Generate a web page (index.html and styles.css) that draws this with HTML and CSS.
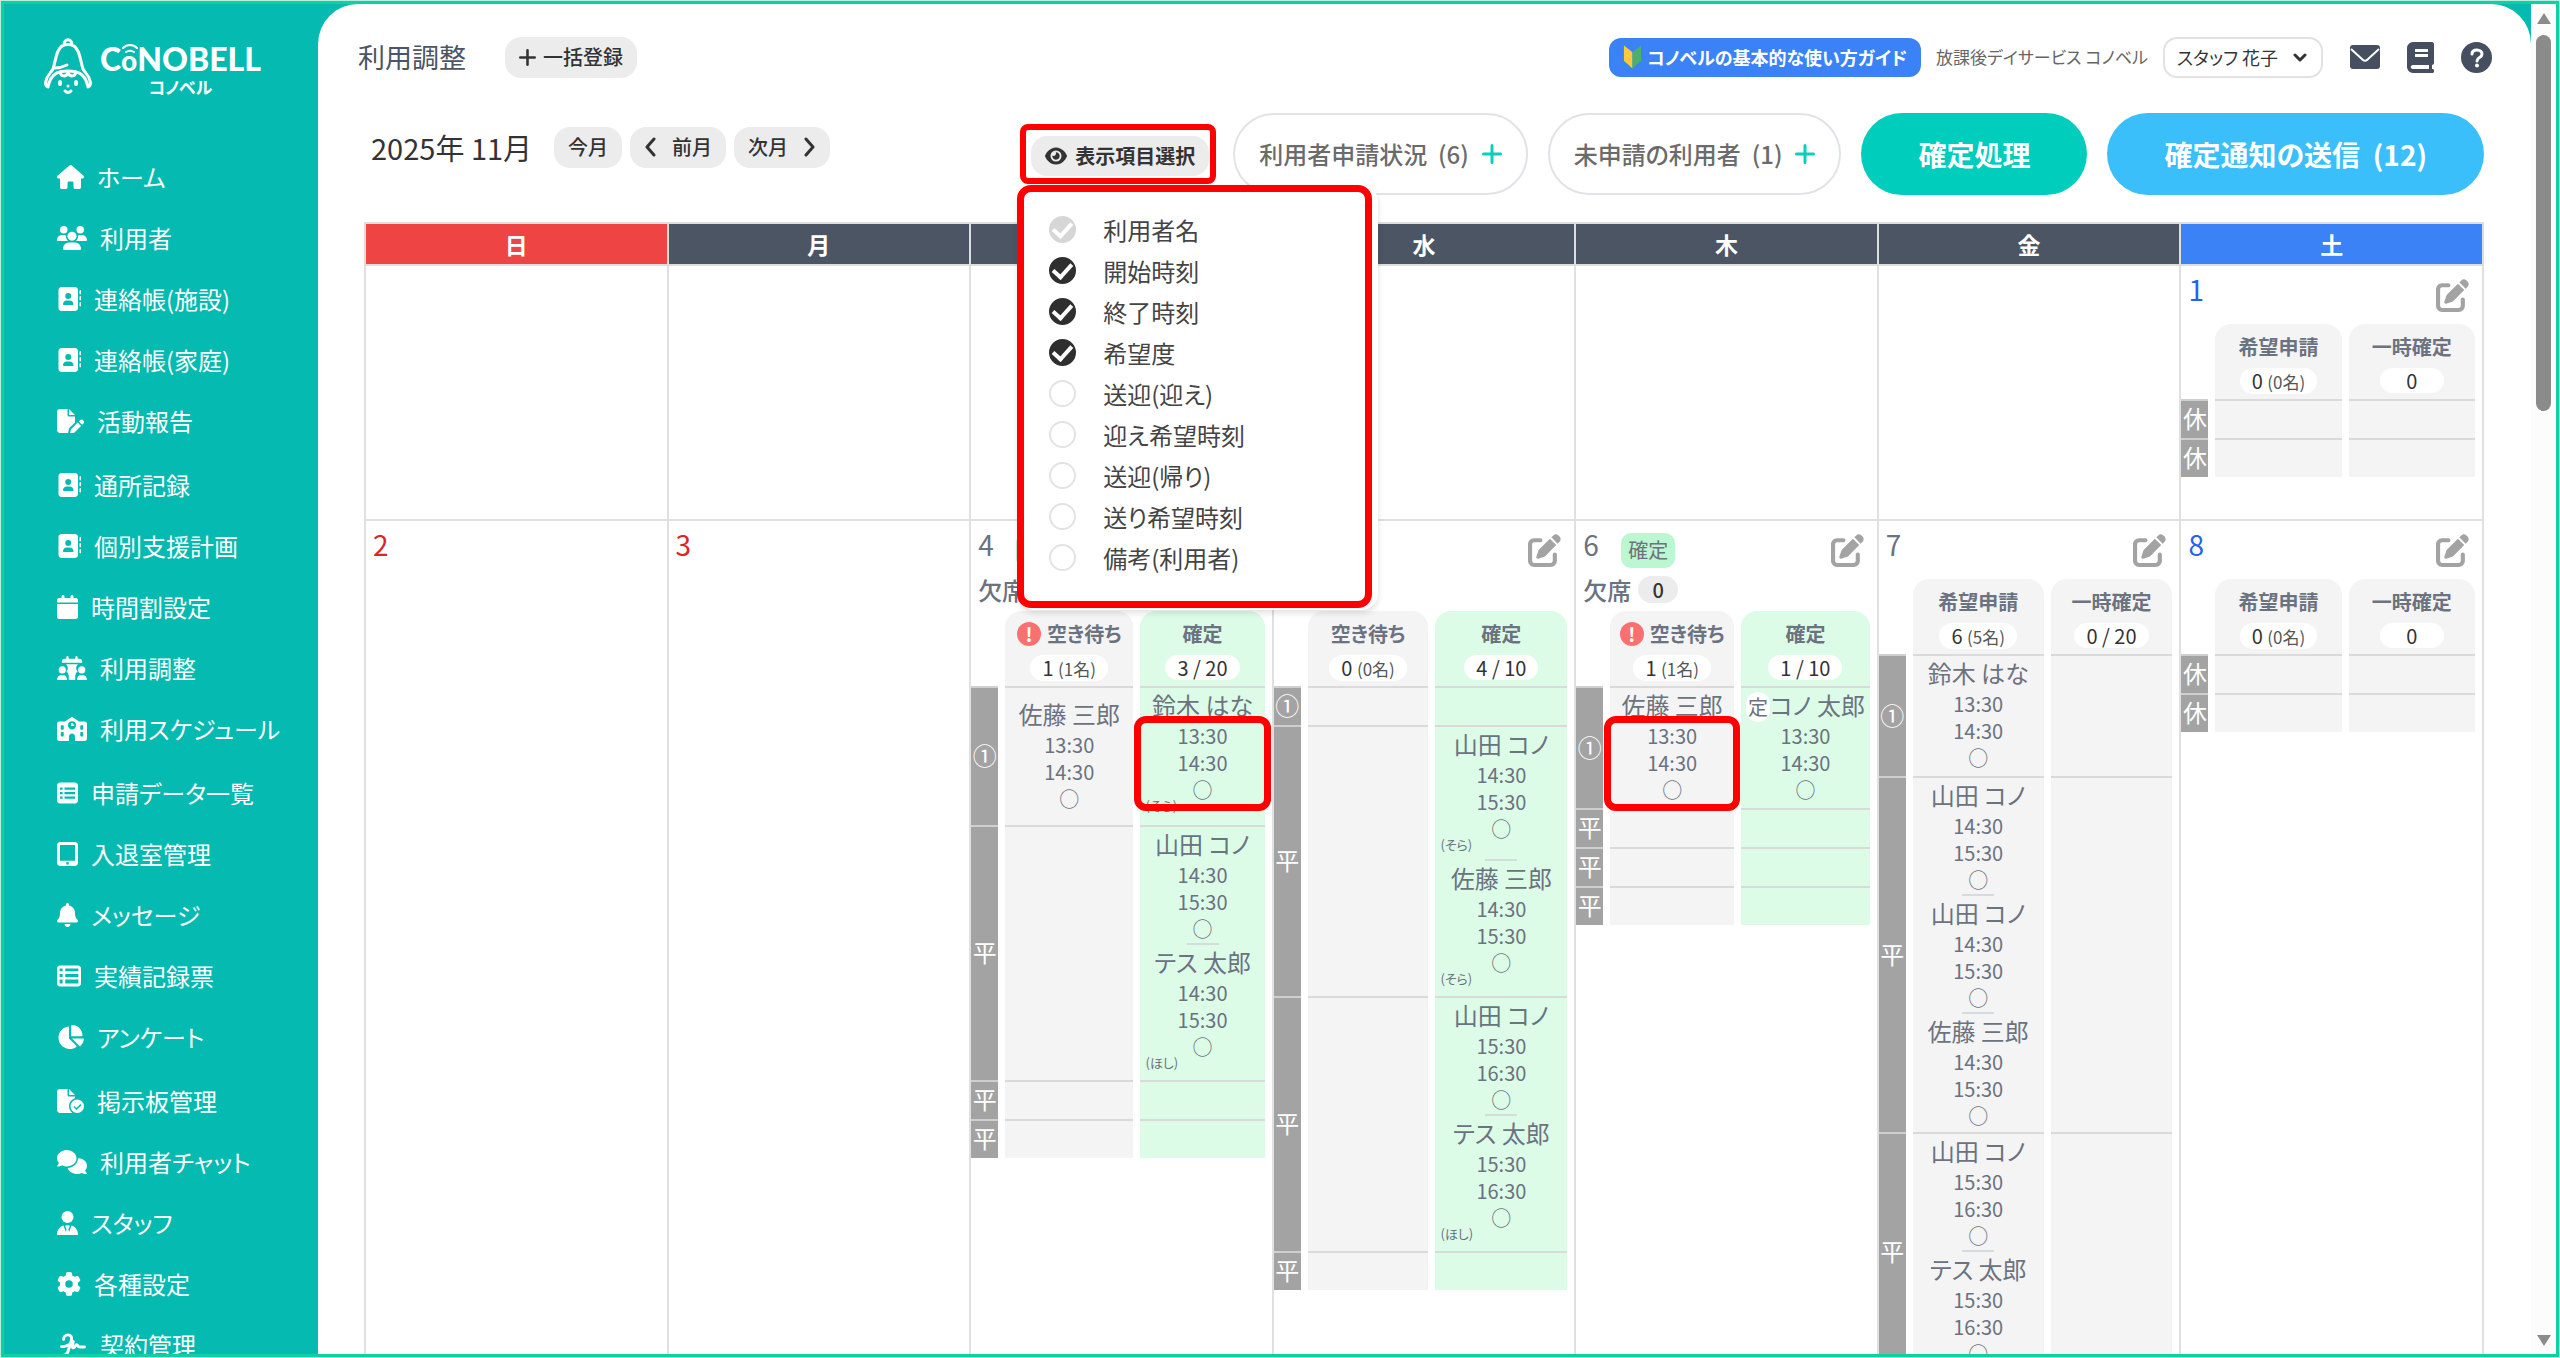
FILE: index.html
```html
<!DOCTYPE html>
<html lang="ja">
<head>
<meta charset="utf-8">
<meta name="viewport" content="width=device-width, initial-scale=1">
<title>利用調整 | コノベル</title>
<link rel="stylesheet" href="styles.css">
</head>
<body>
<svg class="sprite" aria-hidden="true">
  <symbol id="i-home" viewBox="0 0 576 512"><path d="M575.8 255.5c0 18-15 32.1-32 32.1h-32l.7 160.2c0 2.7-.2 5.4-.5 8.1V472c0 22.1-17.9 40-40 40H392c-22.1 0-40-17.9-40-40V384c0-17.7-14.3-32-32-32H256c-17.7 0-32 14.3-32 32v88c0 22.1-17.9 40-40 40H104c-22.1 0-40-17.9-40-40V287.600H32c-18 0-32-14-32-32.100c0-9 3-17 10-24L266.400 8c7-7 15-8 22-8s15 2 21 7L564.800 231.500c8 7 12 15 11 24z"/></symbol>
  <symbol id="i-users" viewBox="0 0 640 512"><circle cx="144" cy="80" r="80"/><circle cx="496" cy="80" r="80"/><circle cx="320" cy="216" r="96"/><path d="M0 299c0-59 48-107 107-107h42c16 0 31 4 45 10-1 7-2 15-2 22 0 38 17 72 43 96H21c-11 0-21-10-21-21zM405 320c27-24 43-58 43-96 0-8-1-15-2-22 14-6 29-10 45-10h42c59 0 107 48 107 107 0 11-10 21-21 21zM128 485c0-73 60-133 133-133h118c73 0 133 60 133 133 0 15-12 27-27 27H155c-15 0-27-12-27-27z"/></symbol>
  <symbol id="i-book-user" viewBox="0 0 512 512"><path d="M96 0C60.700 0 32 28.700 32 64V448c0 35.300 28.700 64 64 64H384c35.300 0 64-28.700 64-64V64c0-35.300-28.700-64-64-64H96zM208 288h64c44.200 0 80 35.800 80 80c0 8.800-7.200 16-16 16H144c-8.800 0-16-7.200-16-16c0-44.200 35.800-80 80-80zm-32-96a64 64 0 1 1 128 0 64 64 0 1 1 -128 0zM512 80c0-8.800-7.200-16-16-16s-16 7.200-16 16v64c0 8.800 7.200 16 16 16s16-7.200 16-16V80zM496 192c-8.800 0-16 7.200-16 16v64c0 8.800 7.200 16 16 16s16-7.200 16-16V208c0-8.800-7.200-16-16-16zm16 144c0-8.800-7.200-16-16-16s-16 7.200-16 16v64c0 8.800 7.200 16 16 16s16-7.200 16-16V336z"/></symbol>
  <symbol id="i-file-pen" viewBox="0 0 576 512"><path d="M0 64C0 29 29 0 64 0h160v128c0 18 14 32 32 32h128v126L273 397c-9 9-15 19-18 31l-21 84H64c-35 0-64-29-64-64zM384 128H256V0zM550 235l16 16c16 16 16 41 0 57l-30 30-71-71 30-30c15-16 40-16 55-2zM303 429l139-139 71 71-139 139c-4 4-9 7-15 8l-60 15c-5 1-11 0-15-4s-5-10-4-15l15-60c1-6 4-11 8-15z"/></symbol>
  <symbol id="i-calendar" viewBox="0 0 448 512"><path d="M96 32V64H48C21.500 64 0 85.500 0 112v48H448V112c0-26.500-21.500-48-48-48H352V32c0-17.700-14.300-32-32-32s-32 14.300-32 32V64H160V32c0-17.700-14.300-32-32-32S96 14.300 96 32zM448 192H0V464c0 26.500 21.500 48 48 48H400c26.500 0 48-21.500 48-48V192z"/></symbol>
  <symbol id="i-calendar-users" viewBox="0 0 640 512"><path d="M200 30c0-38 48-38 48 0v26h144V30c0-38 48-38 48 0v26h40c32 0 56 24 56 52v36H104v-36c0-28 24-52 56-52h40zM190 176h260c-48 34-58 110-10 154-38 26-52 60-52 120v62H252v-62c0-60-14-94-52-120 48-44 38-120-10-154z"/><circle cx="112" cy="296" r="76"/><circle cx="528" cy="296" r="76"/><path d="M0 512c0-62 36-104 84-104h56c42 0 76 42 76 104zM424 512c0-62 34-104 76-104h56c48 0 84 42 84 104z"/></symbol>
  <symbol id="i-school" viewBox="0 0 640 512"><path fill-rule="evenodd" d="M337 5l134 91h121c26 0 48 22 48 48v320c0 26-22 48-48 48H384v-96c0-35-29-64-64-64s-64 29-64 64v96H48c-26 0-48-22-48-48V144c0-26 22-48 48-48h121L303 5c10-7 24-7 34 0zM80 192v64c0 9 7 16 16 16h32c9 0 16-7 16-16v-64c0-9-7-16-16-16H96c-9 0-16 7-16 16zm416 0v64c0 9 7 16 16 16h32c9 0 16-7 16-16v-64c0-9-7-16-16-16h-32c-9 0-16 7-16 16zM80 336v64c0 9 7 16 16 16h32c9 0 16-7 16-16v-64c0-9-7-16-16-16H96c-9 0-16 7-16 16zm416 0v64c0 9 7 16 16 16h32c9 0 16-7 16-16v-64c0-9-7-16-16-16h-32c-9 0-16 7-16 16zM320 88a88 88 0 1 0 0 176 88 88 0 1 0 0-176zm-16 40h32v32h32v32h-64z"/></symbol>
  <symbol id="i-list" viewBox="0 0 448 512"><path fill-rule="evenodd" d="M64 32h320c35 0 64 29 64 64v320c0 35-29 64-64 64H64c-35 0-64-29-64-64V96c0-35 29-64 64-64zM64 136v48h56v-48zm96 0v48h224v-48zM64 232v48h56v-48zm96 0v48h224v-48zM64 328v48h56v-48zm96 0v48h224v-48z"/></symbol>
  <symbol id="i-tablet" viewBox="0 0 448 512"><path fill-rule="evenodd" d="M64 0h320c35 0 64 29 64 64v384c0 35-29 64-64 64H64c-35 0-64-29-64-64V64C0 29 29 0 64 0zm0 64v336h320V64zm160 360a30 30 0 1 0 0 60 30 30 0 1 0 0-60z"/></symbol>
  <symbol id="i-bell" viewBox="0 0 448 512"><path d="M224 0c-17.700 0-32 14.300-32 32V51.200C119 66 64 130.600 64 208v18.800c0 47-17.300 92.400-48.500 127.600l-7.400 8.300c-8.400 9.400-10.400 22.900-5.300 34.400S19.400 416 32 416H416c12.600 0 24-7.400 29.200-18.900s3.100-25-5.300-34.400l-7.400-8.300C401.300 319.200 384 273.900 384 226.800V208c0-77.400-55-142-128-156.800V32c0-17.700-14.300-32-32-32zm45.300 493.300c12-12 18.700-28.300 18.700-45.300H160c0 17 6.700 33.300 18.700 45.300s28.300 18.700 45.300 18.700s33.300-6.700 45.300-18.700z"/></symbol>
  <symbol id="i-table" viewBox="0 0 512 512"><path fill-rule="evenodd" d="M64 32h384c35 0 64 29 64 64v320c0 35-29 64-64 64H64c-35 0-64-29-64-64V96c0-35 29-64 64-64zm-8 64v60h64V96zm120 0v60h280V96zM56 212v64h64v-64zm120 0v64h280v-64zM56 332v84h64v-84zm120 0v84h280v-84z"/></symbol>
  <symbol id="i-pie" viewBox="0 0 576 512"><path d="M304 240V16.600c0-9 7-16.600 16-16.600C443.700 0 544 100.300 544 224c0 9-7.600 16-16.600 16H304zM32 272C32 150.700 122.100 50.300 239 34.300c9.200-1.300 17 6.100 17 15.400V288L412.500 444.500c6.700 6.700 6.200 17.700-1.500 23.100C371.800 495.600 323.800 512 272 512C139.500 512 32 404.600 32 272zm526.400 16c9.300 0 16.600 7.800 15.400 17c-7.700 55.900-34.600 105.600-73.900 142.300c-6 5.600-15.400 5.200-21.200-.7L320 288H558.400z"/></symbol>
  <symbol id="i-file-check" viewBox="0 0 576 512"><path fill-rule="evenodd" d="M0 64C0 29 29 0 64 0h160v128c0 18 14 32 32 32h128v38c-74 21-128 89-128 170 0 60 29 112 74 144H64c-35 0-64-29-64-64zM384 128H256V0zM432 224a144 144 0 1 1 0 288 144 144 0 1 1 0-288zm67 98l-83 83-42-42-22 22 64 65 106-106z"/></symbol>
  <symbol id="i-comments" viewBox="0 0 640 512"><path d="M208 352c115 0 208-79 208-176S323 0 208 0 0 79 0 176c0 39 15 74 40 103-4 24-17 43-36 57-6 5 0 16 8 16 40 0 76-11 100-26 29 16 62 26 96 26zM448 176c0 112-98 201-221 208 26 74 107 128 205 128 34 0 67-7 95-19 26 13 60 19 101 19 9 0 15-9 8-16-17-15-30-34-36-58 25-29 40-65 40-102 0-88-85-160-192-160z"/></symbol>
  <symbol id="i-staff" viewBox="0 0 448 512"><circle cx="224" cy="128" r="128"/><path d="M0 500c0-90 58-170 138-190l52 138 14-60-24-52c-6-14 2-32 18-32h52c16 0 24 18 18 32l-24 52 14 60 52-138c80 20 138 100 138 190 0 8-6 12-12 12H12c-6 0-12-4-12-12z"/></symbol>
  <symbol id="i-gear" viewBox="0 0 512 512"><path d="M495.900 166.600c3.200 8.700 .5 18.400-6.400 24.600l-43.300 39.400c1.100 8.300 1.700 16.800 1.700 25.400s-.6 17.100-1.700 25.400l43.300 39.400c6.900 6.200 9.600 15.900 6.400 24.600c-4.400 11.900-9.700 23.300-15.800 34.300l-4.700 8.100c-6.600 11-14 21.400-22.100 31.200c-5.900 7.200-15.700 9.600-24.500 6.800l-55.700-17.700c-13.400 10.300-28.200 18.900-44 25.400l-12.500 57.100c-2 9.100-9 16.300-18.200 17.800c-13.800 2.300-28 3.500-42.500 3.500s-28.700-1.200-42.500-3.500c-9.200-1.500-16.200-8.700-18.200-17.800l-12.500-57.100c-15.800-6.500-30.600-15.100-44-25.400L83.100 425.900c-8.800 2.800-18.600 .3-24.500-6.800c-8.100-9.800-15.500-20.200-22.100-31.200l-4.700-8.100c-6.100-11-11.400-22.400-15.800-34.300c-3.200-8.700-.5-18.400 6.400-24.600l43.300-39.400C64.600 273.100 64 264.600 64 256s.6-17.100 1.700-25.400L22.400 191.200c-6.900-6.200-9.600-15.900-6.400-24.600c4.400-11.900 9.700-23.300 15.800-34.300l4.700-8.100c6.600-11 14-21.400 22.100-31.200c5.900-7.200 15.700-9.600 24.500-6.800l55.700 17.700c13.400-10.300 28.200-18.900 44-25.400l12.500-57.100c2-9.100 9-16.300 18.200-17.800C227.300 1.200 241.500 0 256 0s28.700 1.200 42.500 3.500c9.200 1.500 16.200 8.700 18.200 17.800l12.500 57.100c15.800 6.500 30.600 15.100 44 25.400l55.700-17.700c8.800-2.800 18.600-.3 24.500 6.800c8.100 9.800 15.500 20.200 22.100 31.200l4.700 8.100c6.100 11 11.400 22.400 15.800 34.300zM256 336a80 80 0 1 0 0-160 80 80 0 1 0 0 160z"/></symbol>
  <symbol id="i-sign" viewBox="0 0 640 512"><path fill="none" stroke="currentColor" stroke-width="62" stroke-linecap="round" stroke-linejoin="round" d="M140 140c0-60 40-100 92-100 66 0 92 54 72 122L232 400c-20 60-70 80-120 80M96 290c120 0 200-60 250-110l-20 100c-8 40 30 50 50 20l20-30c20-28 46-20 50 4 4 26 24 26 50 26h90"/></symbol>
  <symbol id="i-edit" viewBox="0 0 512 512"><path d="M471.600 21.700c-21.900-21.900-57.300-21.900-79.200 0L362.300 51.700l97.900 97.900 30.100-30.100c21.900-21.900 21.900-57.300 0-79.200L471.600 21.700zm-299.200 220c-6.100 6.100-10.800 13.600-13.500 21.900l-29.600 88.800c-2.900 8.600-.6 18.100 5.800 24.600s15.900 8.700 24.600 5.800l88.800-29.600c8.200-2.700 15.700-7.400 21.900-13.500L437.700 172.300 339.700 74.300 172.400 241.700zM96 64C43 64 0 107 0 160V416c0 53 43 96 96 96H352c53 0 96-43 96-96V320c0-17.700-14.300-32-32-32s-32 14.300-32 32v96c0 17.700-14.300 32-32 32H96c-17.700 0-32-14.300-32-32V160c0-17.700 14.300-32 32-32h96c17.700 0 32-14.300 32-32s-14.300-32-32-32H96z"/></symbol>
  <symbol id="i-eye" viewBox="0 0 576 512"><path d="M288 32c-80.800 0-145.500 36.800-192.600 80.600C48.600 156 17.300 208 2.500 243.700c-3.300 7.900-3.300 16.700 0 24.600C17.300 304 48.600 356 95.400 399.400C142.500 443.200 207.200 480 288 480s145.500-36.800 192.600-80.600c46.800-43.500 78.100-95.400 93-131.100c3.300-7.900 3.300-16.700 0-24.600c-14.900-35.700-46.200-87.700-93-131.100C433.500 68.800 368.800 32 288 32zM144 256a144 144 0 1 1 288 0 144 144 0 1 1 -288 0zm144-64c0 35.300-28.700 64-64 64c-7.100 0-13.900-1.200-20.300-3.300c-5.500-1.800-11.900 1.600-11.700 7.400c.3 6.900 1.300 13.800 3.200 20.700c13.700 51.200 66.400 81.600 117.600 67.900s81.600-66.400 67.900-117.600c-11.100-41.500-47.800-69.400-88.600-71.100c-5.800-.2-9.200 6.100-7.400 11.700c2.100 6.400 3.300 13.200 3.300 20.300z"/></symbol>
  <symbol id="i-plus" viewBox="0 0 20 20"><path fill="none" stroke="currentColor" stroke-width="3" stroke-linecap="round" d="M10 1.500v17M1.500 10h17"/></symbol>
  <symbol id="i-left" viewBox="0 0 12 20"><path fill="none" stroke="currentColor" stroke-width="3" stroke-linecap="round" stroke-linejoin="round" d="M10 2L3 10l7 8"/></symbol>
  <symbol id="i-right" viewBox="0 0 12 20"><path fill="none" stroke="currentColor" stroke-width="3" stroke-linecap="round" stroke-linejoin="round" d="M2 2l7 8-7 8"/></symbol>
</svg>

<div class="app">
  <aside class="sidebar">
    <a class="logo" href="#">
      <svg class="logo-mark" viewBox="0 0 50 58" aria-hidden="true">
        <g fill="none" stroke="#fff" stroke-width="3" stroke-linecap="round" stroke-linejoin="round">
          <path d="M21 8c0-7 8-7 8 0M19 9c4-2 8-2 12 0"/>
          <path d="M19 9c-6 4-6 14-9 23-2 4-6 6-7 12-1 3 0 5 2 6 3-15 12-16 20-16s17 1 20 16c2-1 3-3 2-6-1-6-5-8-7-12-3-9-3-19-9-23"/>
          <path d="M12 31c5 0 8-1 12-3M17 35c1 5 6 5 8 1 2 4 7 4 8-1M22 54c2 2 4 2 6 0"/>
        </g>
        <g fill="#fff"><ellipse cx="17" cy="46" rx="2" ry="3"/><ellipse cx="33" cy="46" rx="2" ry="3"/><circle cx="25" cy="49" r="1.500"/></g>
      </svg>
      <span class="logo-text">
        <span class="logo-name">C<span class="logo-o">o<svg class="logo-wave" viewBox="0 0 18 9" aria-hidden="true"><path d="M2 4c4-4 10-4 14 0M5 8c3-2 5-2 8 0" fill="none" stroke="#fff" stroke-width="2" stroke-linecap="round"/></svg></span>NOBELL</span>
        <span class="logo-kana">コノベル</span>
      </span>
    </a>
    <nav class="nav">
      <ul>
        <li><a href="#"><svg class="w27"><use href="#i-home"/></svg>ホーム</a></li>
        <li><a href="#"><svg class="w30"><use href="#i-users"/></svg>利用者</a></li>
        <li><a href="#"><svg class="w24"><use href="#i-book-user"/></svg>連絡帳(施設)</a></li>
        <li><a href="#"><svg class="w24"><use href="#i-book-user"/></svg>連絡帳(家庭)</a></li>
        <li><a href="#"><svg class="w27"><use href="#i-file-pen"/></svg>活動報告</a></li>
      </ul>
      <ul>
        <li><a href="#"><svg class="w24"><use href="#i-book-user"/></svg>通所記録</a></li>
        <li><a href="#"><svg class="w24"><use href="#i-book-user"/></svg>個別支援計画</a></li>
        <li><a href="#"><svg class="w21"><use href="#i-calendar"/></svg>時間割設定</a></li>
        <li><a href="#"><svg class="w30"><use href="#i-calendar-users"/></svg>利用調整</a></li>
        <li><a href="#"><svg class="w30"><use href="#i-school"/></svg>利用スケジュール</a></li>
      </ul>
      <ul>
        <li><a href="#"><svg class="w21"><use href="#i-list"/></svg>申請データ一覧</a></li>
        <li><a href="#"><svg class="w21"><use href="#i-tablet"/></svg>入退室管理</a></li>
        <li><a href="#"><svg class="w21"><use href="#i-bell"/></svg>メッセージ</a></li>
        <li><a href="#"><svg class="w24"><use href="#i-table"/></svg>実績記録票</a></li>
        <li><a href="#"><svg class="w27"><use href="#i-pie"/></svg>アンケート</a></li>
      </ul>
      <ul>
        <li><a href="#"><svg class="w27"><use href="#i-file-check"/></svg>掲示板管理</a></li>
        <li><a href="#"><svg class="w30"><use href="#i-comments"/></svg>利用者チャット</a></li>
        <li><a href="#"><svg class="w21"><use href="#i-staff"/></svg>スタッフ</a></li>
        <li><a href="#"><svg class="w24"><use href="#i-gear"/></svg>各種設定</a></li>
        <li><a href="#"><svg class="w30"><use href="#i-sign"/></svg>契約管理</a></li>
      </ul>
    </nav>
  </aside>

  <main class="main">
    <header class="topbar">
      <h1>利用調整</h1>
      <button class="chip" type="button"><svg class="plus"><use href="#i-plus"/></svg>一括登録</button>
      <div class="topbar-right">
        <a class="guide" href="#"><svg viewBox="0 0 20 26" aria-hidden="true"><path d="M1 1l9 7v17l-9-8z" fill="#ffc83d"/><path d="M19 1l-9 7v17l9-8z" fill="#4caf6a"/></svg>コノベルの基本的な使い方ガイド</a>
        <span class="facility">放課後デイサービス コノベル</span>
        <div class="account">
          <select aria-label="アカウント"><option>スタッフ 花子</option></select>
          <svg viewBox="0 0 14 10" aria-hidden="true"><path d="M2 2l5 5 5-5" fill="none" stroke="currentColor" stroke-width="3" stroke-linecap="round" stroke-linejoin="round"/></svg>
        </div>
        <a class="tool" href="#" aria-label="メール"><svg width="30" height="24" viewBox="0 0 30 24"><rect width="30" height="24" rx="3" fill="currentColor"/><path d="M1 4l12 11c1 1 3 1 4 0L29 4" fill="none" stroke="#fff" stroke-width="2"/></svg></a>
        <a class="tool" href="#" aria-label="マニュアル"><svg width="27" height="31" viewBox="0 0 27 31"><path fill-rule="evenodd" fill="currentColor" d="M6 0h19c1 0 2 1 2 2v19c0 1-1 2-2 2v4c3 0 3 4 0 4H6c-3 0-6-3-6-6V6c0-3 3-6 6-6zm0 23c-3 0-3 4 0 4h16v-4zM8 7v3h13V7zm0 5v3h13v-3z"/></svg></a>
        <a class="tool" href="#" aria-label="ヘルプ"><svg width="31" height="31" viewBox="0 0 31 31"><circle cx="15.500" cy="15.500" r="15.500" fill="currentColor"/><path d="M11 12c0-3 2-4 5-4s5 2 5 4c0 4-5 3-5 7" fill="none" stroke="#fff" stroke-width="3" stroke-linecap="round"/><circle cx="16" cy="23.500" r="2" fill="#fff"/></svg></a>
      </div>
    </header>

    <section class="toolbar">
      <div class="month">
        <h2>2025年 11月</h2>
        <button class="chip" type="button">今月</button>
        <button class="chip prev" type="button"><svg class="arrow"><use href="#i-left"/></svg>前月</button>
        <button class="chip next" type="button">次月<svg class="arrow"><use href="#i-right"/></svg></button>
      </div>
      <div class="actions">
        <div class="columns-picker">
          <button class="chip picker-button" type="button"><svg class="eye"><use href="#i-eye"/></svg>表示項目選択</button>
          <div class="menu">
            <label><input type="checkbox" checked disabled>利用者名</label>
            <label><input type="checkbox" checked>開始時刻</label>
            <label><input type="checkbox" checked>終了時刻</label>
            <label><input type="checkbox" checked>希望度</label>
            <label><input type="checkbox">送迎(迎え)</label>
            <label><input type="checkbox">迎え希望時刻</label>
            <label><input type="checkbox">送迎(帰り)</label>
            <label><input type="checkbox">送り希望時刻</label>
            <label><input type="checkbox">備考(利用者)</label>
          </div>
        </div>
        <button class="pill" type="button">利用者申請状況&nbsp; (6)<svg class="plus"><use href="#i-plus"/></svg></button>
        <button class="pill" type="button">未申請の利用者&nbsp; (1)<svg class="plus"><use href="#i-plus"/></svg></button>
        <button class="pill primary" type="button">確定処理</button>
        <button class="pill info" type="button">確定通知の送信&nbsp; (12)</button>
      </div>
    </section>

    <table class="calendar">
      <thead>
        <tr><th class="sun">日</th><th>月</th><th>火</th><th>水</th><th>木</th><th>金</th><th class="sat">土</th></tr>
      </thead>
      <tbody>
        <tr class="week-short">
          <td></td><td></td><td></td><td></td><td></td><td></td>
          <td>
            <div class="day-top"><span class="date sat-text">1</span><button class="edit" type="button" aria-label="編集"><svg><use href="#i-edit"/></svg></button></div>
            <div class="slots">
              <i></i>
              <div class="head">希望申請<span class="count">0 <small>(0名)</small></span></div>
              <div class="head">一時確定<span class="count">0</span></div>
              <b>休</b><div></div><div></div>
              <b>休</b><div></div><div></div>
            </div>
          </td>
        </tr>
        <tr>
          <td><div class="day-top"><span class="date sun-text">2</span></div></td>
          <td><div class="day-top"><span class="date sun-text">3</span></div></td>
          <td>
            <div class="day-top"><span class="date">4</span><span class="fixed">確定</span><button class="edit" type="button" aria-label="編集"><svg><use href="#i-edit"/></svg></button></div>
            <div class="absent">欠席<span>0</span></div>
            <div class="slots" style="--a:129fr;--b:125fr">
              <i></i>
              <div class="head"><span class="title"><em>!</em>空き待ち</span><span class="count">1 <small>(1名)</small></span></div>
              <div class="head ok">確定<span class="count">3 / 20</span></div>
              <b>①</b>
              <div><div class="entry"><p>佐藤 三郎</p><div class="times">13:30<br>14:30<br>○</div></div></div>
              <div class="ok"><div class="entry"><p>鈴木 はな</p><div class="times marked">13:30<br>14:30<br>○</div><small class="room">(そら)</small></div></div>
              <b>平</b>
              <div></div>
              <div class="ok">
                <div class="entry"><p>山田 コノ</p><div class="times">14:30<br>15:30<br>○</div></div>
                <div class="entry"><p>テス 太郎</p><div class="times">14:30<br>15:30<br>○</div><small class="room">(ほし)</small></div>
              </div>
              <b>平</b><div></div><div class="ok"></div>
              <b>平</b><div></div><div class="ok"></div>
            </div>
          </td>
          <td>
            <div class="day-top"><span class="date">5</span><button class="edit" type="button" aria-label="編集"><svg><use href="#i-edit"/></svg></button></div>
            <div class="absent"></div>
            <div class="slots" style="--a:121fr;--b:132fr">
              <i></i>
              <div class="head">空き待ち<span class="count">0 <small>(0名)</small></span></div>
              <div class="head ok">確定<span class="count">4 / 10</span></div>
              <b>①</b><div></div><div class="ok"></div>
              <b>平</b>
              <div></div>
              <div class="ok">
                <div class="entry"><p>山田 コノ</p><div class="times">14:30<br>15:30<br>○</div><small class="room">(そら)</small></div>
                <div class="entry"><p>佐藤 三郎</p><div class="times">14:30<br>15:30<br>○</div><small class="room">(そら)</small></div>
              </div>
              <b>平</b>
              <div></div>
              <div class="ok">
                <div class="entry"><p>山田 コノ</p><div class="times">15:30<br>16:30<br>○</div></div>
                <div class="entry"><p>テス 太郎</p><div class="times">15:30<br>16:30<br>○</div><small class="room">(ほし)</small></div>
              </div>
              <b>平</b><div></div><div class="ok"></div>
            </div>
          </td>
          <td>
            <div class="day-top"><span class="date">6</span><span class="fixed">確定</span><button class="edit" type="button" aria-label="編集"><svg><use href="#i-edit"/></svg></button></div>
            <div class="absent">欠席<span>0</span></div>
            <div class="slots" style="--a:124fr;--b:129fr">
              <i></i>
              <div class="head"><span class="title"><em>!</em>空き待ち</span><span class="count">1 <small>(1名)</small></span></div>
              <div class="head ok">確定<span class="count">1 / 10</span></div>
              <b>①</b>
              <div><div class="entry"><p>佐藤 三郎</p><div class="times marked">13:30<br>14:30<br>○</div></div></div>
              <div class="ok"><div class="entry"><p><span class="regular">定</span>コノ 太郎</p><div class="times">13:30<br>14:30<br>○</div></div></div>
              <b>平</b><div></div><div class="ok"></div>
              <b>平</b><div></div><div class="ok"></div>
              <b>平</b><div></div><div class="ok"></div>
            </div>
          </td>
          <td>
            <div class="day-top"><span class="date">7</span><button class="edit" type="button" aria-label="編集"><svg><use href="#i-edit"/></svg></button></div>
            <div class="slots" style="--a:132fr;--b:123fr">
              <i></i>
              <div class="head">希望申請<span class="count">6 <small>(5名)</small></span></div>
              <div class="head">一時確定<span class="count">0 / 20</span></div>
              <b>①</b>
              <div><div class="entry"><p>鈴木 はな</p><div class="times">13:30<br>14:30<br>○</div></div></div>
              <div></div>
              <b>平</b>
              <div>
                <div class="entry"><p>山田 コノ</p><div class="times">14:30<br>15:30<br>○</div></div>
                <div class="entry"><p>山田 コノ</p><div class="times">14:30<br>15:30<br>○</div></div>
                <div class="entry"><p>佐藤 三郎</p><div class="times">14:30<br>15:30<br>○</div></div>
              </div>
              <div></div>
              <b>平</b>
              <div>
                <div class="entry"><p>山田 コノ</p><div class="times">15:30<br>16:30<br>○</div></div>
                <div class="entry"><p>テス 太郎</p><div class="times">15:30<br>16:30<br>○</div></div>
              </div>
              <div></div>
            </div>
          </td>
          <td>
            <div class="day-top"><span class="date sat-text">8</span><button class="edit" type="button" aria-label="編集"><svg><use href="#i-edit"/></svg></button></div>
            <div class="slots">
              <i></i>
              <div class="head">希望申請<span class="count">0 <small>(0名)</small></span></div>
              <div class="head">一時確定<span class="count">0</span></div>
              <b>休</b><div></div><div></div>
              <b>休</b><div></div><div></div>
            </div>
          </td>
        </tr>
      </tbody>
    </table>
  </main>

  <div class="scrollbar" aria-hidden="true">
    <svg viewBox="0 0 16 13"><path d="M8 1l7 11H1z"/></svg>
    <span class="thumb"></span>
    <svg viewBox="0 0 16 13"><path d="M8 12L1 1h14z"/></svg>
  </div>
</div>
</body>
</html>
```

FILE: styles.css
```css
* { box-sizing: border-box; }

html, body { height: 100%; }

body {
  margin: 0;
  padding: 1px;
  background: #b5efdf;
  color: #333;
  font: 400 24px/32px "Noto Sans CJK JP", "Noto Sans", sans-serif;
  font-feature-settings: "palt";
}

h1, h2, p, ul { margin: 0; padding: 0; font-weight: 400; }
ul { list-style: none; }
a { color: inherit; text-decoration: none; }
button, select { font: inherit; font-feature-settings: inherit; color: inherit; border: 0; padding: 0; }
svg { display: block; flex: none; fill: currentColor; }

.sprite { position: absolute; width: 0; height: 0; }

.app {
  display: grid;
  grid-template-columns: 314px 1fr 25px;
  height: 100%;
  overflow: hidden;
  border: 3px solid #0fd1a0;
  background: #05bab0;
}

/* Sidebar */
.sidebar { color: #fff; overflow: hidden; }

.logo { display: flex; gap: 7px; padding: 33px 0 0 39px; height: 142px; }
.logo-mark { width: 50px; height: 58px; }
.logo-text { display: flex; flex-direction: column; align-items: center; padding-top: 4px; }
.logo-name { font: 900 32px/36px Lato, sans-serif; }
.logo-o { position: relative; font-size: 28px; }
.logo-wave { position: absolute; left: 0; top: 1px; width: 18px; height: 9px; }
.logo-kana { font-size: 17px; font-weight: 700; line-height: 18px; }

.nav { display: grid; gap: 3px; }
.nav a { display: flex; align-items: center; gap: 13px; height: 61px; padding-left: 53px; white-space: nowrap; }
.nav svg { height: 24px; }
.w21 { width: 21px; }
.w24 { width: 24px; }
.w27 { width: 27px; }
.w30 { width: 30px; }

/* Main */
.main { min-width: 0; overflow: hidden; background: #fff; border-radius: 40px 40px 0 0; }

.topbar { display: flex; align-items: center; height: 74px; margin-top: 16px; padding: 0 39px 0 40px; }
.topbar h1 { font-size: 27px; color: #4b5563; margin-right: 39px; }
.topbar-right { display: flex; align-items: center; margin-left: auto; }

.chip {
  display: flex;
  align-items: center;
  justify-content: center;
  height: 41px;
  padding: 0 14px;
  border-radius: 16px;
  background: #ececec;
  font-size: 20px;
  font-weight: 500;
  white-space: nowrap;
}
.chip .plus { width: 17px; height: 17px; margin-right: 7px; }
.arrow { width: 12px; height: 20px; }
.prev .arrow { margin-right: 16px; }
.next .arrow { margin-left: 16px; }

.guide {
  display: flex;
  align-items: center;
  gap: 5px;
  height: 39px;
  padding: 0 14px;
  border-radius: 12px;
  background: #3b82f6;
  color: #fff;
  font-size: 18px;
  font-weight: 700;
}
.guide svg { width: 19px; height: 26px; }
.facility { margin: 0 15px; font-size: 17px; color: #666; }
.account { position: relative; margin-right: 27px; color: #333; }
.account select {
  display: block;
  appearance: none;
  width: 160px;
  height: 41px;
  padding: 0 0 0 12px;
  border: 2px solid #e2e2e2;
  border-radius: 14px;
  background: #fff;
  font-size: 18px;
}
.account svg { position: absolute; right: 16px; top: 16px; width: 14px; height: 10px; }
.tool { color: #454f60; margin-left: 27px; }
.account + .tool { margin-left: 0; }

.toolbar { display: flex; justify-content: space-between; height: 128px; padding: 19px 47px 27px 53px; }
.month { display: flex; align-items: center; gap: 8px; padding-bottom: 14px; }
.month h2 { font-size: 29px; line-height: 40px; margin-right: 14px; }
.actions { display: flex; align-items: center; gap: 20px; }

.pill {
  display: flex;
  align-items: center;
  height: 82px;
  padding: 0 24px;
  border: 2px solid #e0e3e8;
  border-radius: 41px;
  background: #fff;
  color: #6b6b6b;
  font-weight: 500;
  white-space: nowrap;
}
.pill .plus { width: 20px; height: 20px; margin-left: 13px; color: #0ecdbb; }
.primary, .info { border: 0; padding: 0 57px; color: #fff; font-size: 28px; font-weight: 700; }
.primary { background: #00cdbc; }
.info { background: #3bbffa; }

.columns-picker {
  position: relative;
  height: 60px;
  margin-right: -3px;
  padding: 6px 1px 2px 5px;
  border: 6px solid #f00;
  border-radius: 8px;
}
.picker-button { height: 40px; font-weight: 700; }
.eye { width: 22px; height: 20px; margin-right: 8px; }

.menu {
  position: absolute;
  z-index: 5;
  top: 55px;
  left: -8px;
  width: 360px;
  padding: 24px 0 32px 31px;
  border-radius: 16px;
  background: #fff;
  box-shadow: 0 3px 6px rgba(0, 0, 0, .12);
}
.menu::after {
  content: "";
  position: absolute;
  inset: 0 6px 2px -1px;
  border: 7px solid #f00;
  border-radius: 14px;
  pointer-events: none;
}
.menu label { display: flex; align-items: center; gap: 27px; height: 41px; color: #444; }
.menu input {
  appearance: none;
  width: 27px;
  height: 27px;
  margin: 0;
  border: 2px solid #e3e3e3;
  border-radius: 50%;
  background: #fff;
  display: grid;
  place-items: center;
}
.menu input:checked { border-color: #2f2f2f; background: #2f2f2f; }
.menu input:checked::before {
  content: "";
  width: 15px;
  height: 8px;
  margin-bottom: 4px;
  border: solid #fff;
  border-width: 0 0 4px 4px;
  rotate: -48deg;
}
.menu input:checked:disabled { border-color: #d6d6d6; background: #d6d6d6; }

/* Calendar */
.calendar { width: calc(100% - 93px); margin: 0 47px 0 46px; table-layout: fixed; border-collapse: collapse; }
.calendar th {
  height: 42px;
  padding: 0;
  border: 2px solid #dedede;
  background: #4b5563;
  color: #fff;
  font-size: 23px;
  font-weight: 700;
}
.calendar .sun { background: #ef4444; }
.calendar .sat { background: #3b82f6; }
.calendar td { padding: 0; border: 2px solid #e0e0e0; vertical-align: top; color: #6b7280; }
.week-short td { height: 255px; }

.day-top { display: flex; align-items: flex-start; height: 55px; padding: 6px 13px 0 7px; }
.date { width: 38px; font-size: 28px; line-height: 34px; }
.sun-text { color: #dc2626; }
.sat-text { color: #2563eb; }
.fixed {
  height: 35px;
  margin-top: 6px;
  padding: 0 7px;
  border-radius: 10px;
  background: #bbf7d0;
  font-size: 20px;
  line-height: 34px;
}
.edit { margin: 7px 0 0 auto; background: none; color: #a3a3a3; }
.edit svg { width: 33px; height: 33px; }
.absent { display: flex; align-items: center; gap: 7px; height: 27px; margin-bottom: 8px; padding-left: 7px; font-weight: 500; }
.absent span {
  width: 40px;
  border-radius: 14px;
  background: #ececec;
  color: #333;
  font-size: 20px;
  line-height: 27px;
  text-align: center;
}

.slots {
  display: grid;
  grid-template-columns: 27px minmax(0, var(--a, 1fr)) minmax(0, var(--b, 1fr));
  grid-auto-rows: minmax(39px, auto);
  column-gap: 7px;
  margin-top: 3px;
  padding-right: 7px;
}
.slots > b {
  display: grid;
  place-items: center;
  padding-bottom: 3px;
  border-top: 2px solid #cfcfcf;
  background: #a3a3a3;
  color: #fff;
  font-weight: 400;
}
.slots > div {
  display: flex;
  flex-direction: column;
  justify-content: center;
  border-top: 2px solid #dadada;
  background: #f4f4f4;
}
.slots > .ok { background: #dcfce7; }
.slots > .head {
  align-items: center;
  justify-content: flex-start;
  gap: 8px;
  height: 75px;
  padding-top: 10px;
  border: 0;
  border-radius: 16px 16px 0 0;
  font-size: 20px;
  font-weight: 700;
  line-height: 26px;
}
.title { display: flex; align-items: center; gap: 6px; }
.title em {
  width: 24px;
  height: 24px;
  border-radius: 50%;
  background: #f87171;
  color: #fff;
  font-style: normal;
  font-size: 19px;
  line-height: 23px;
  text-align: center;
}
.count {
  min-width: 64px;
  padding: 0 12px;
  border-radius: 13px;
  background: #fff;
  color: #333;
  font-weight: 400;
  line-height: 25px;
  text-align: center;
  white-space: nowrap;
}
.count small { font-size: 17px; color: #555; }

.entry { text-align: center; padding-bottom: 3px; white-space: nowrap; }
.entry p { line-height: 34px; }
.entry:only-child { padding-bottom: 5px; }
.entry:not(:last-child)::after {
  content: "";
  display: block;
  width: 32px;
  height: 2px;
  margin: 1px auto -3px;
  background: #d6dbe0;
}
.times { position: relative; font-size: 20px; line-height: 27px; }
.marked::after {
  content: "";
  position: absolute;
  z-index: 2;
  inset: -6px -6px -8px;
  border: 7px solid #f00;
  border-radius: 12px;
}
.room { display: block; margin: -6px 0 6px; padding-left: 5px; font-size: 13px; line-height: 17px; text-align: left; }
.regular { display: inline-block; width: 24px; border-radius: 14px; background: #fff; font-size: 20px; line-height: 30px; }

/* Scrollbar */
.scrollbar { display: flex; flex-direction: column; align-items: center; padding: 8px 0 7px; background: #fcfcfc; color: #8b8b8b; }
.scrollbar svg { width: 16px; height: 13px; }
.thumb { width: 15px; height: 376px; margin: 10px 0 auto; border-radius: 8px; background: #8b8b8b; }
```
